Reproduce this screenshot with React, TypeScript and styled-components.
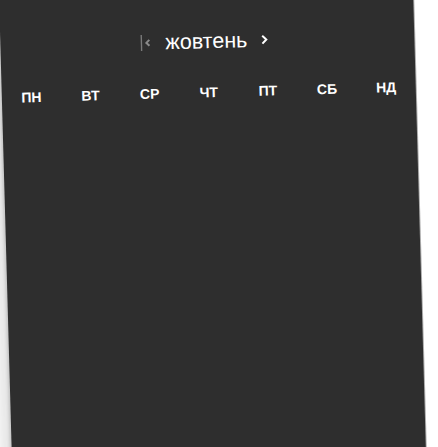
import React from "react";
import styled, { createGlobalStyle } from "styled-components";

const Global = createGlobalStyle`
  html, body { margin: 0; padding: 0; background: #ffffff; overflow: hidden; }
  body { width: 438px; height: 447px; font-family: "Liberation Sans", Arial, sans-serif; }
`;

const Page = styled.div`
  width: 438px;
  height: 447px;
  overflow: hidden;
  background: #ffffff;
`;

const Card = styled.div`
  width: 414px;
  height: 480px;
  margin: -4px 0 0 -1px;
  background: #2e2e2e;
  transform-origin: 0 0;
  transform: rotate(-1.6deg);
  box-shadow: -12px 0 8px rgba(0, 0, 0, 0.09), -2px 0 3px rgba(0, 0, 0, 0.15),
    1px 0 0 rgba(140, 140, 140, 0.7);
  display: flex;
  flex-direction: column;
  padding-top: 37px;
  box-sizing: border-box;
`;

const Header = styled.div`
  display: flex;
  align-items: center;
  justify-content: center;
  gap: 13px;
  height: 28px;
  padding-right: 6px;
`;

const NavButton = styled.button<{ $disabled?: boolean }>`
  background: none;
  border: 0;
  padding: 0;
  display: flex;
  align-items: center;
  color: ${(p) => (p.$disabled ? "#8a8a8a" : "#ffffff")};
`;

const Month = styled.div`
  color: #ffffff;
  font-size: 21.5px;
  line-height: 28px;
`;

const Weekdays = styled.div`
  display: grid;
  grid-template-columns: repeat(7, 1fr);
  margin-top: 28px;
`;

const Weekday = styled.div`
  color: #ffffff;
  font-weight: 700;
  font-size: 14px;
  line-height: 18px;
  text-align: center;
`;

const days = ["ПН", "ВТ", "СР", "ЧТ", "ПТ", "СБ", "НД"];

export default function App() {
  return (
    <Page>
      <Global />
      <Card>
        <Header>
          <NavButton $disabled>
            <svg width="12" height="18" viewBox="0 0 12 18">
              <line x1="1" y1="1" x2="1" y2="17" stroke="#7a7a7a" strokeWidth="1.5" />
              <polyline points="9,6 6,9 9,12" fill="none" stroke="#8a8a8a" strokeWidth="2" />
            </svg>
          </NavButton>
          <Month>жовтень</Month>
          <NavButton>
            <svg width="8" height="12" viewBox="0 0 8 12">
              <polyline points="2,2 6,6 2,10" fill="none" stroke="#ffffff" strokeWidth="2" />
            </svg>
          </NavButton>
        </Header>
        <Weekdays>
          {days.map((d) => (
            <Weekday key={d}>{d}</Weekday>
          ))}
        </Weekdays>
      </Card>
    </Page>
  );
}
